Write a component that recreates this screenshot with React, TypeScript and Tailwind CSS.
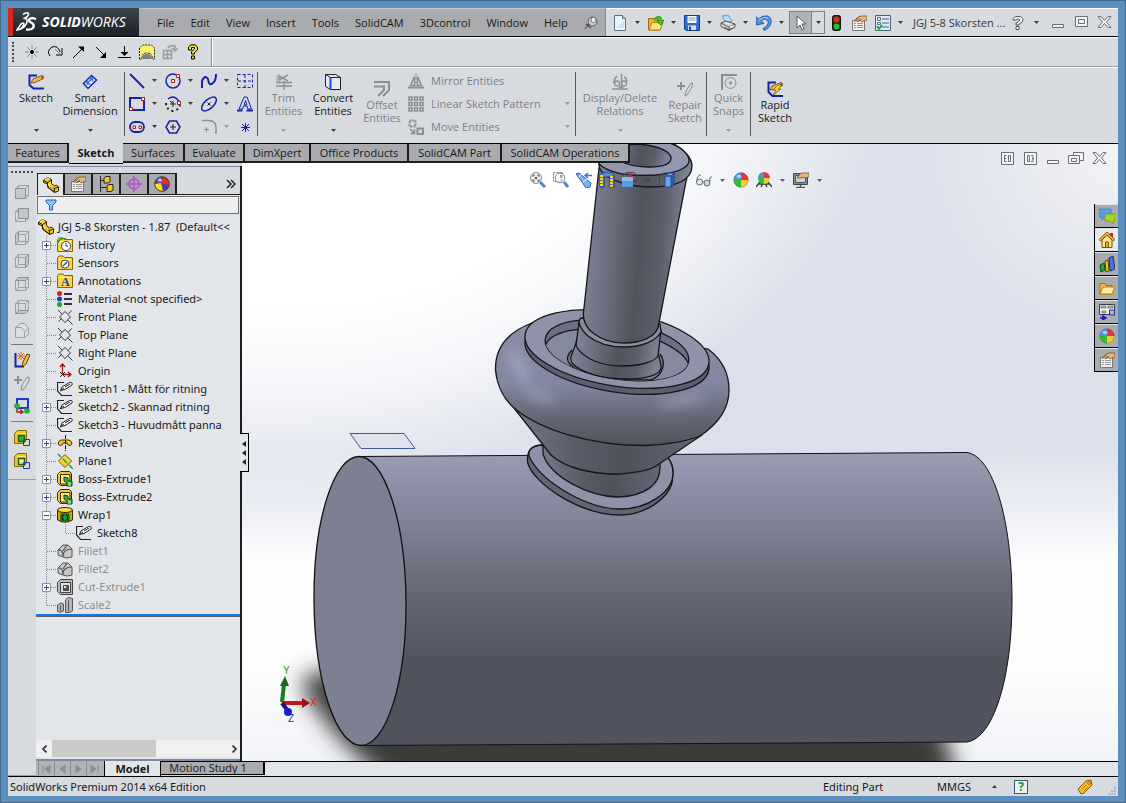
import React from "react";

type IconProps = { children: React.ReactNode; w?: number; h?: number };

const Icon = ({ children, w = 16, h = 16 }: IconProps) => (
    <svg
        width={w}
        height={h}
        viewBox={`0 0 ${w} ${h}`}
        fill="none"
        className="shrink-0"
        aria-hidden="true"
    >
        {children}
    </svg>
);

const Caret = ({ dim = false }: { dim?: boolean }) => (
    <Icon w={5} h={3}>
        <path d="M0 0h5L2.500 3z" fill={dim ? "#94979b" : "#3a3c40"} />
    </Icon>
);

/* ---------- shared glyphs ---------- */

const PartGlyph = () => (
    <Icon>
        <path d="M.5 3.500l4-3 4 2v4l3 2.500 2-1 2 2v4l-4 1.500-6.500-5-1-4-3.500-1z" fill="#f5c81c" stroke="#2a2000" />
        <path d="M.5 3.500l4 2 4-2.500M4.500 5.500v4.500l7 5M11.500 11.500v4M11.500 11.500l4-1.500M5 9l6.500 2.500" stroke="#2a2000" />
        <path d="M2 3l2.500-2L7 2.500M6 7v2l4 2" stroke="#fff0a0" />
    </Icon>
);

const HandSheetGlyph = () => (
    <Icon>
        <path d="M1.500 5.500h12v10h-12z" fill="#eeeeec" stroke="#777" />
        <path d="M3 8.500h2M6 8.500h6M3 10.500h2M6 10.500h6M3 12.500h2M6 12.500h6" stroke="#999" />
        <path d="M3 6l4-4 3-1h6v4l-3 1-2 1-2-2-2 2-1-1z" fill="#e8b67a" stroke="#6b4317" strokeWidth=".7" />
        <path d="M5 5l3-2M7 6l3-2" stroke="#6b4317" strokeWidth=".7" />
    </Icon>
);

const BallGlyph = () => (
    <Icon>
        <path d="M8 8V.5A7.500 7.500 0 00.5 8z" fill="#4f8fe8" />
        <path d="M8 8V.5A7.500 7.500 0 0115.500 8z" fill="#e03a36" />
        <path d="M8 8H.5A7.500 7.500 0 008 15.500z" fill="#2fc02f" />
        <path d="M8 8h7.500A7.500 7.500 0 018 15.500z" fill="#f4c93a" />
        <circle cx="8" cy="8" r="7.200" stroke="#555" strokeOpacity=".5" strokeWidth=".7" />
        <ellipse cx="6" cy="4.500" rx="2.500" ry="1.800" fill="#fff" opacity=".55" />
    </Icon>
);

/* red, yellow and blue ball on the DisplayManager tab */
const DisplayGlyph = () => (
    <Icon>
        <circle cx="8" cy="8" r="7.300" fill="#c81c1c" stroke="#222" strokeWidth=".8" />
        <path d="M8 1Q3 1 1.500 5l5 3z" fill="#2b5fd0" />
        <path d="M1 8l6-1 2 8Q2 15 1 8z" fill="#f6e11c" />
        <path d="M8 8l7 1q-1 5-6 6z" fill="#2a4cc0" />
        <path d="M7 7l3-6 5 5v3z" fill="#e0302a" />
        <ellipse cx="6" cy="4" rx="2" ry="1.500" fill="#fff" opacity=".7" />
    </Icon>
);

const SketchGlyph = () => (
    <Icon>
        <path d="M7 1.500H.5V10l4 4.500H15" stroke="#222" strokeWidth="1.200" />
        <path d="M3.500 9.500L5 6l7.500-4.500q3.500-.5 2.500 2.500L8 8.500z" fill="#fff" stroke="#222" />
        <path d="M3 10l4-3M8 6l5-3" stroke="#222" />
    </Icon>
);

const PlaneGlyph = () => (
    <Icon>
        <path d="M8 2.500l5.500 5.500L8 13.500 2.500 8zM1 1l4 4M11 11l4.500 4.500M1.500 12.500l3-3M11.500 5l3-3.500" stroke="#333" />
    </Icon>
);

const BossGlyph = () => (
    <Icon>
        <path d="M.5 3.500l3-3h9l2 2v12h-11l-3-3z" fill="#f3c92a" stroke="#3a2c00" />
        <path d="M3.500 3.500h9.500v9.500H3.500z" fill="#ffe88a" stroke="#3a2c00" />
        <path d="M7 6l4 1v3h4v5h-5v-3l-3-2z" fill="#35b044" stroke="#0d4a14" />
        <path d="M11 11.500h3v3h-3z" fill="#8be08f" />
    </Icon>
);

const FolderGlyph = ({ children }: { children: React.ReactNode }) => (
    <Icon>
        <path d="M.5 14.500v-12L2 1h4l1.500 1.500h8v12z" fill="#f9d44a" stroke="#8a6200" />
        <path d="M1.500 4.500h13" stroke="#fff0a8" />
        {children}
    </Icon>
);

const FilletGlyph = () => (
    <Icon>
        <path d="M1 7l5-5h5l4 4v8l-5 1-4-1-5-2z" fill="#c8c8c8" stroke="#555" />
        <path d="M1 7q5-1 5 7M6 13q0-7 9-7M6 8l4-6" stroke="#555" strokeWidth="1.200" />
    </Icon>
);

const CubeGlyph = ({ face }: { face: string }) => (
    <Icon>
        <path d="M1.500 4.500h10v10h-10zM4.500 1.500h10v10h-10zM1.500 4.500l3-3M11.500 4.500l3-3M11.500 14.500l3-3M1.500 14.500l3-3" stroke="#9c9fa3" />
        <path d={face} fill="#c3c6ca" stroke="#8d9094" />
    </Icon>
);

/* ---------- title bar ---------- */

const menus = ["File", "Edit", "View", "Insert", "Tools", "SolidCAM", "3Dcontrol", "Window", "Help"];

const fileTools = [
    {
        label: "New",
        icon: (
            <Icon>
                <path d="M2.500 .5h8l3 3v12h-11z" fill="#eaf4fd" stroke="#5e7286" />
                <path d="M10.500 .5v3h3" fill="#bcd4ea" stroke="#5e7286" />
                <path d="M4 13h8V6z" fill="#cfe3f5" />
            </Icon>
        ),
    },
    {
        label: "Open",
        icon: (
            <Icon>
                <path d="M.5 15V3.500h5l1 2H12V15z" fill="#f6b52c" stroke="#a86a08" />
                <path d="M.8 15L4 7.500h11L12 15z" fill="#ffe27a" stroke="#b77d10" />
                <path d="M6 4q3-4 7-2l1 4 2-1-3 5-4-3 2-.5Q10 3 6 4z" fill="#45c92c" stroke="#16760a" strokeWidth=".7" />
            </Icon>
        ),
    },
    {
        label: "Save",
        icon: (
            <Icon>
                <path d="M.5 .5h15v15H2l-1.500-1.500z" fill="#2d6fd2" stroke="#103a80" />
                <path d="M3.500 1h9v7h-9z" fill="#f5f7fa" />
                <path d="M4.500 3h7M4.500 5h7" stroke="#8d9cb0" />
                <path d="M4 10.500h8V15H4z" fill="#d9dde3" />
                <path d="M5 11.500h2V15H5z" fill="#1b3f80" />
            </Icon>
        ),
    },
    {
        label: "Print",
        icon: (
            <Icon>
                <path d="M2 1l6-1 4 6-6 2z" fill="#b9dcf8" stroke="#5b86a8" strokeWidth=".8" />
                <path d="M1 8l5-2 9 3v3l-6 3.500-8-4z" fill="#d9dbde" stroke="#55585c" />
                <path d="M1 8l8 4 6-3M9 12v3M4 12l5 2.500 4-2" stroke="#55585c" />
                <path d="M10 12.500l3-1.500" stroke="#fff" strokeWidth="1.500" />
            </Icon>
        ),
    },
    {
        label: "Undo",
        icon: (
            <Icon>
                <path d="M0 1.500l2 2.500q5-4 10-3 4 2 3 7-1 5-7 7.500l-1-2q6-3 5-7-2-4-7-1l3 3-7.500 1.500z" fill="#4d95e6" stroke="#134c98" strokeWidth=".8" />
                <path d="M3 5q5-4 9-2" stroke="#b4d7fa" />
            </Icon>
        ),
    },
];

const DsLogo = () => (
    <Icon w={22} h={22}>
        <path d="M7 3.500q4-3 5.500-1 .5 3-5 5 5-1 3 5-3 6-9.500 6.500l4-6q3-2 3 0-1 4-4 5" stroke="#fff" strokeWidth="1.600" />
        <path d="M20 8q-6-2-7 1 0 2 3 3 3 2 1 5-2 2-7 1.500" stroke="#fff" strokeWidth="2.300" />
    </Icon>
);

type WindowButtonKind = "min" | "max" | "close" | "restore" | "left" | "right";

const windowShapes: Record<WindowButtonKind, string> = {
    min: "M2.500 9.500h11v3h-11z",
    max: "M2.500 1.500h12v10h-12zM5.500 4.500h6v4h-6z",
    close: "M2 1.500h3l3.500 4 3.500-4h3l-4.500 5.500 4.500 5.500h-3l-3.500-4-3.500 4H2L6.500 7z",
    restore: "M5.500 4.500v-3h10v8h-4M.5 4.500h11v8H.5zM3.500 7.500h5v3h-5z",
    left: "M2.500 1.500h12v12h-12zM9.500 4.500h2v6h-2zM7.500 4.500H5.500v6h2M5 7.500h2",
    right: "M2.500 1.500h12v12h-12zM5.500 4.500h2v6h-2zM9 4.500h2v6H9M10 7.500h2",
};

const WindowButton = ({ kind }: { kind: WindowButtonKind }) => (
    <button aria-label={kind} className="flex w-[23px] justify-center">
        <Icon h={15}>
            <path d={windowShapes[kind]} fill="#f8f9fb" fillOpacity=".8" stroke="#6b6e79" />
        </Icon>
    </button>
);

const TitleBar = () => (
    <header className="flex h-[29px] shrink-0 items-stretch border-b border-black bg-[#d7dbe0]">
        <div className="flex w-[131px] shrink-0 items-center border-l-[5px] border-[#d8281c] bg-linear-to-b from-[#3d454d] to-[#1a2027] pl-[3px] text-white">
            <DsLogo />
            <span className="ml-[4px] text-sm leading-4 italic">
                <b>SOLID</b>WORKS
            </span>
        </div>
        <nav className="flex w-[467px] shrink-0 items-center gap-4 border-t border-r border-t-[#c3c5c8] border-r-[#85878a] bg-[#a9abae] pl-[18px]">
            {menus.map((menu) => (
                <button key={menu} className="whitespace-nowrap">
                    {menu}
                </button>
            ))}
            <button aria-label="Pin menu">
                <Icon w={14} h={14}>
                    <path d="M1 13l4-5" stroke="#444" />
                    <circle cx="8.500" cy="5.500" r="4.500" fill="#c6c9ce" stroke="#55585d" />
                    <circle cx="9.500" cy="4" r="2.500" fill="#eef0f3" stroke="#777a80" />
                    <path d="M2 8l5 4" stroke="#444" strokeWidth="1.500" />
                </Icon>
            </button>
        </nav>
        <div className="flex flex-1 items-center border-t border-white pl-[3px]">
            {fileTools.map((tool) => (
                <div key={tool.label} className="mr-[2px] flex items-center">
                    <button aria-label={tool.label} className="flex w-[22px] justify-center">
                        {tool.icon}
                    </button>
                    <button aria-label={`${tool.label} options`} className="flex w-3 justify-center">
                        <Caret />
                    </button>
                </div>
            ))}
            <div className="flex h-[23px] items-stretch border border-[#7d8084]">
                <button aria-label="Select" className="flex w-[22px] items-center justify-center border-r border-[#7d8084] bg-[#b0b3b7]">
                    <Icon w={10} h={16}>
                        <path d="M1 1v12l3-3 2 5 2-1-2-5h4z" fill="#fff" stroke="#555" />
                    </Icon>
                </button>
                <button aria-label="Select options" className="flex w-3 items-center justify-center">
                    <Caret />
                </button>
            </div>
            <button aria-label="Rebuild" className="ml-[7px]">
                <Icon w={9}>
                    <rect x=".5" y=".5" width="8" height="15" rx="2" fill="#222" stroke="#111" />
                    <circle cx="4.500" cy="4.500" r="3" fill="#e02a20" />
                    <circle cx="4.500" cy="11.500" r="3" fill="#25c425" />
                </Icon>
            </button>
            <button aria-label="File properties" className="ml-[10px]">
                <HandSheetGlyph />
            </button>
            <button aria-label="Options" className="ml-[8px]">
                <Icon>
                    <path d="M.5 .5h15v15H.5z" fill="#dcebf7" stroke="#4c6377" />
                    <path d="M2.500 2.500h3v3h-3zM2.500 7.500h3v2h-3z" stroke="#5a7286" />
                    <path d="M7 4h7M7 8h7M7 12h7" stroke="#4c6377" />
                    <path d="M2 11l2 3 3-4" stroke="#1aa51a" strokeWidth="1.800" />
                </Icon>
            </button>
            <button aria-label="Options menu" className="ml-[7px]">
                <Caret />
            </button>
            <span className="ml-[10px] flex-1 whitespace-nowrap text-[#33363a]">JGJ 5-8 Skorsten ...</span>
            <button aria-label="Help" className="mr-[10px]">
                <Icon w={12} h={14}>
                    <path d="M1 4q0-3.500 5-3.500t5 3.500q0 2-4 4v1H4V7q4-2 4-3t-2-1-2 1zM4 10.500h3v3H4z" fill="#fff" stroke="#4c4f55" />
                </Icon>
            </button>
            <button aria-label="Help menu" className="mr-[7px]">
                <Caret />
            </button>
            <WindowButton kind="min" />
            <WindowButton kind="max" />
            <WindowButton kind="close" />
            <div className="w-[3px]" />
        </div>
    </header>
);

/* ---------- quick snap toolbar ---------- */

const snapTools = [
    {
        label: "Point",
        icon: (
            <Icon>
                <path d="M8 1v4M8 11v4M1 8h4M11 8h4M3 3l3 3M13 3l-3 3M3 13l3-3M13 13l-3-3" stroke="#888" />
                <circle cx="8" cy="8" r="2" fill="#000" />
            </Icon>
        ),
    },
    {
        label: "Arc",
        icon: (
            <Icon>
                <path d="M3 12Q-1 7 5 3q6-2 8 5" stroke="#000" />
                <path d="M15 4v7H9" stroke="#000" />
                <path d="M8 5l5 5" stroke="#777" />
            </Icon>
        ),
    },
    {
        label: "Arrow up",
        icon: (
            <Icon>
                <path d="M3 14L12 5" stroke="#000" />
                <path d="M8 2.500h6V8z" fill="#000" />
            </Icon>
        ),
    },
    {
        label: "Arrow down",
        icon: (
            <Icon>
                <path d="M3 3l9 9" stroke="#000" />
                <path d="M13 8v6H7z" fill="#000" />
            </Icon>
        ),
    },
    {
        label: "Normal to",
        icon: (
            <Icon>
                <path d="M8.500 2v7M2 13.500h13" stroke="#000" />
                <path d="M4.500 8h8l-4 4z" fill="#000" />
            </Icon>
        ),
    },
    {
        label: "Render region",
        icon: (
            <Icon>
                <path d="M.5 15V4l3-3h9l3 3v11h-2q0-6-5.500-6T3 15z" fill="#fbf36a" stroke="#222" strokeDasharray="2 1" />
                <path d="M3 15q0-5 5-5t5 5z" fill="#808080" />
            </Icon>
        ),
    },
    {
        label: "Rebuild geometry",
        icon: (
            <Icon>
                <path d="M1.500 6.500h4v4h-4zM5.500 6.500h4v4h-4zM1.500 10.500h4v4h-4zM5.500 10.500h4v4h-4z" stroke="#999" strokeWidth="1.500" />
                <path d="M6 4q1-3 7-2v3M10 4l3 3 3-3" stroke="#999" strokeWidth="1.500" />
            </Icon>
        ),
    },
    {
        label: "What's this",
        icon: (
            <Icon>
                <path d="M3.500 6V3L6 .8h4L12.500 3v3L9.500 8.500V10h-3V7.500L9.500 5V3.500h-3V6zM6.500 12h3v3h-3z" fill="#f7e81c" stroke="#000" />
            </Icon>
        ),
    },
];

const SnapToolbar = () => (
    <div className="flex h-[30px] shrink-0 items-stretch border-t border-b border-t-white border-b-[#9a9da1]">
        <div className="my-1 ml-1 mr-[6px] border-l-2 border-dotted border-[#44474b]" />
        <div className="flex border-r border-[#8c8f93] pr-[7px]">
            {snapTools.map((tool) => (
                <button key={tool.label} aria-label={tool.label} className="flex w-[23px] items-center justify-center">
                    {tool.icon}
                </button>
            ))}
        </div>
        <div className="flex-1 border-l border-white" />
    </div>
);

/* ---------- ribbon ---------- */

const blue = "#1522a8";
const grey = "#8b8e92";

type BigButtonProps = {
    lines: string[];
    icon: React.ReactNode;
    width: string;
    low?: boolean;
    dim?: boolean;
    caret?: boolean;
};

const BigButton = ({ lines, icon, width, low, dim, caret }: BigButtonProps) => (
    <button
        className={`flex shrink-0 flex-col items-center ${width} ${low ? "pt-[13px]" : "pt-[6px]"} ${dim ? "text-[#7d8084]" : ""}`}
    >
        {icon}
        <span className="mt-px flex flex-1 flex-col">
            {lines.map((line) => (
                <span key={line} className="leading-[13px] whitespace-nowrap">
                    {line}
                </span>
            ))}
        </span>
        {caret && (
            <span className="pb-[11px]">
                <Caret dim={dim} />
            </span>
        )}
    </button>
);

const Divider = () => <div className="mt-[4px] mb-[7px] w-px shrink-0 bg-[#55585c]" />;

const sketchTools = [
    { label: "Line", caret: true, icon: <path d="M1 1l14 14" stroke={blue} strokeWidth="2" /> },
    {
        label: "Circle",
        caret: true,
        icon: (
            <>
                <circle cx="8" cy="8" r="7" stroke={blue} strokeWidth="1.500" />
                <path d="M6.500 6.500h3v3h-3zM11.500 1.500h3v3h-3z" fill="#fff" stroke="#b01818" />
            </>
        ),
    },
    { label: "Spline", caret: true, icon: <path d="M1 15V8q3-7 6-2 1 8 5 4 3-2 3-9" stroke={blue} strokeWidth="2" /> },
    { label: "Plane", icon: <path d="M.5 1.500h15v13H.5zM1 8h14M8 2v13" stroke={blue} strokeDasharray="3 2" /> },
    {
        label: "Rectangle",
        caret: true,
        icon: (
            <>
                <path d="M1 2h14v12H1z" stroke={blue} strokeWidth="2" />
                <path d="M12.500 1.500h3v3h-3zM.5 11.500h3v3h-3z" fill="#fff" stroke="#b01818" />
            </>
        ),
    },
    {
        label: "Arc",
        caret: true,
        icon: (
            <>
                <path d="M3 3q5-4 9 0 2 2 3 4" stroke={blue} strokeWidth="1.500" />
                <path d="M1 7q0 7 7 8 6-1 7-6" stroke="#222" strokeWidth="2" strokeDasharray="2 3" />
                <path d="M8 5v6M5 8h6M5 5l3 3" stroke="#222" />
                <path d="M12.500 5.500h3v3h-3z" fill="#fff" stroke="#b01818" />
            </>
        ),
    },
    {
        label: "Ellipse",
        caret: true,
        icon: (
            <>
                <ellipse cx="8" cy="8" rx="9" ry="4.500" transform="rotate(-42 8 8)" stroke={blue} strokeWidth="1.500" />
                <path d="M6.500 6.500l3 3M9.500 6.500l-3 3" stroke="#222" />
            </>
        ),
    },
    {
        label: "Text",
        icon: (
            <>
                <path d="M7 1h3l4.500 12h-3.500l-1-3H6.500l-1 3H2zM8.500 4.500L7 9h3z" stroke={blue} />
                <path d="M0 14.500h5.500M9.500 14.500H16" stroke={blue} strokeWidth="2" />
            </>
        ),
    },
    {
        label: "Slot",
        caret: true,
        icon: (
            <>
                <rect x="1" y="3" width="14" height="10" rx="5" stroke={blue} strokeWidth="1.800" />
                <path d="M4 7h2.500v2.500H4zM10 7h2.500v2.500H10z" fill="#fff" stroke="#b01818" />
            </>
        ),
    },
    {
        label: "Polygon",
        icon: (
            <>
                <path d="M4.500 2h7L15 8l-3.500 6h-7L1 8z" stroke={blue} strokeWidth="1.500" />
                <path d="M8 5v6M5 8h6" stroke="#222" />
            </>
        ),
    },
    {
        label: "Sketch fillet",
        caret: true,
        dim: true,
        icon: (
            <>
                <path d="M1 1.500h7q7 0 7 7V15" stroke={grey} strokeWidth="1.500" />
                <path d="M5.500 8v5M3 10.500h5" stroke={grey} />
            </>
        ),
    },
    {
        label: "Point",
        icon: <path d="M8.500 4v9M4 8.500h9M5 5l7 7M12 5l-7 7" stroke={blue} />,
    },
];

const Pencil = () => (
    <>
        <path d="M3 9l2-4 9-3.500q2.500.5 1.500 3L7 8.500z" fill="#f0b848" stroke="#6b3e08" strokeWidth=".8" />
        <path d="M13 2q3-.5 2.500 2.500L13.500 5z" fill="#d0405a" />
    </>
);

const entityRows = [
    {
        label: "Mirror Entities",
        icon: (
            <>
                <path d="M6.500 3.500v9h-4zM9.500 3.500v9h4z" stroke={grey} strokeWidth="1.500" />
                <path d="M8 0v14" stroke={grey} strokeDasharray="3 1" />
                <path d="M0 14.500h16" stroke={grey} strokeWidth="2" />
            </>
        ),
    },
    {
        label: "Linear Sketch Pattern",
        caret: true,
        icon: (
            <path
                d="M1 1h3v3H1zM6.500 1h3v3h-3zM12 1h3v3h-3zM1 6.500h3v3H1zM6.500 6.500h3v3h-3zM12 6.500h3v3h-3zM1 12h3v3H1zM6.500 12h3v3h-3zM12 12h3v3h-3z"
                stroke={grey}
                strokeWidth="1.500"
            />
        ),
    },
    {
        label: "Move Entities",
        caret: true,
        icon: (
            <>
                <path d="M1.500 1.500h6v6h-6z" stroke={grey} strokeWidth="2" strokeDasharray="2 1" />
                <path d="M9.500 9.500h5.500V15H9.500z" stroke={grey} strokeWidth="2" />
                <path d="M2 10l4 4M6.500 10v4.500h-4" stroke={grey} strokeWidth="1.500" />
            </>
        ),
    },
];

const Ribbon = () => (
    <div className="flex h-[77px] shrink-0 items-stretch border-t border-b border-t-white border-b-black">
        <BigButton
            lines={["Sketch"]}
            width="w-14"
            caret
            icon={
                <Icon>
                    <path d="M9 1.500H1.500V11l4 3.500H16" stroke={blue} strokeWidth="2" />
                    <Pencil />
                </Icon>
            }
        />
        <BigButton
            lines={["Smart", "Dimension"]}
            width="w-[52px]"
            caret
            icon={
                <Icon>
                    <path d="M1 10.500L10.500 1M5.500 15.500L15 6" stroke={blue} strokeWidth="0" />
                    <path d="M1.500 9.500l4.500 5 8.500-8.500-5-4.500z" fill="#f2f5ff" stroke={blue} strokeWidth="1.500" />
                    <path d="M5 9.500l5-5M5 6.500v3.500h3.500M7 4h3.500v3.500" stroke="#3c68e8" strokeWidth="1.500" />
                </Icon>
            }
        />
        <div className="w-2 shrink-0" />
        <Divider />
        <div className="grid shrink-0 grid-cols-[36px_36px_36px_24px] grid-rows-[23px_23px_23px] pt-px">
            {sketchTools.map((tool) => (
                <div key={tool.label} className="flex items-center">
                    <button aria-label={tool.label} className="flex w-6 justify-center">
                        <Icon>{tool.icon}</Icon>
                    </button>
                    {tool.caret && (
                        <button aria-label={`${tool.label} options`} className="flex w-[10px] justify-center">
                            <Caret dim={tool.dim} />
                        </button>
                    )}
                </div>
            ))}
        </div>
        <Divider />
        <BigButton
            lines={["Trim", "Entities"]}
            width="w-[51px]"
            dim
            caret
            icon={
                <Icon>
                    <path d="M0 8.500h16M0 12h16M8 7v9M3 2l9 5M3 6l9-5" stroke={grey} strokeWidth="1.500" />
                    <circle cx="2.500" cy="2.500" r="1.500" stroke={grey} />
                    <circle cx="2.500" cy="6" r="1.500" stroke={grey} />
                </Icon>
            }
        />
        <BigButton
            lines={["Convert", "Entities"]}
            width="w-12"
            caret
            icon={
                <Icon>
                    <path d="M.5 .5h10l5 3v12h-10l-5-3zM5.500 3.500h10M.5 .5l5 3" fill="#e6e9ed" stroke="#222" />
                    <path d="M5.500 3.500v12" stroke="#1b48f0" strokeWidth="2" />
                </Icon>
            }
        />
        <BigButton
            lines={["Offset", "Entities"]}
            width="w-[50px]"
            low
            dim
            icon={
                <Icon>
                    <path d="M0 1h15v8l-6 6M0 5.500h10V9l-6 6" stroke={grey} strokeWidth="2" />
                </Icon>
            }
        />
        <div className="w-[168px] shrink-0 pt-px">
            {entityRows.map((row) => (
                <div key={row.label} className="flex h-[23px] items-center pl-px text-[#7d8084]">
                    <button className="flex flex-1 items-center gap-[7px]">
                        <Icon>{row.icon}</Icon>
                        {row.label}
                    </button>
                    {row.caret && (
                        <button aria-label={`${row.label} options`} className="mr-[5px]">
                            <Caret dim />
                        </button>
                    )}
                </div>
            ))}
        </div>
        <Divider />
        <BigButton
            lines={["Display/Delete", "Relations"]}
            width="w-[88px]"
            dim
            caret
            icon={
                <Icon>
                    <path d="M0 15h16M9.500 0v13M5 2q-4 4-2.500 8M12 3q3 1 2.500 5" stroke={grey} strokeWidth="1.500" />
                    <circle cx="5" cy="9.500" r="2.500" stroke={grey} strokeWidth="1.300" />
                    <circle cx="12" cy="9.500" r="2.500" stroke={grey} strokeWidth="1.300" />
                    <path d="M6 14l3-3 3 3z" fill={grey} />
                </Icon>
            }
        />
        <BigButton
            lines={["Repair", "Sketch"]}
            width="w-[42px]"
            low
            dim
            icon={
                <Icon>
                    <path d="M4 1v8M0 5h8" stroke={grey} strokeWidth="2" />
                    <path d="M8 15l1-5 5-8h1.500l-.5 4-5 8z" stroke={grey} />
                </Icon>
            }
        />
        <Divider />
        <BigButton
            lines={["Quick", "Snaps"]}
            width="w-[43px]"
            dim
            caret
            icon={
                <Icon>
                    <path d="M1 16V1h15" stroke={grey} strokeWidth="2" />
                    <circle cx="9.500" cy="9" r="5.500" stroke={grey} />
                    <circle cx="9.500" cy="9" r="1.500" fill={grey} />
                </Icon>
            }
        />
        <Divider />
        <BigButton
            lines={["Rapid", "Sketch"]}
            width="w-12"
            low
            icon={
                <Icon>
                    <path d="M9 1.500H1.500V11l4 4H16" stroke={blue} strokeWidth="2" />
                    <Pencil />
                    <path d="M11 4L6 9h3l-3 5 8-6h-3l4-4z" fill="#ffd91c" stroke="#6b4a00" strokeWidth=".7" />
                </Icon>
            }
        />
    </div>
);

/* ---------- command manager tabs ---------- */

const commandTabs = [
    { title: "Features", width: "w-[61px]" },
    { title: "Sketch", width: "w-[54px]" },
    { title: "Surfaces", width: "w-[62px]" },
    { title: "Evaluate", width: "w-[60px]" },
    { title: "DimXpert", width: "w-[66px]" },
    { title: "Office Products", width: "w-[98px]" },
    { title: "SolidCAM Part", width: "w-[93px]" },
    { title: "SolidCAM Operations", width: "w-[128px]" },
];

const CommandTabs = () => (
    <nav className="z-10 -mb-5 flex h-5 shrink-0 items-start self-start">
        {commandTabs.map((tab) =>
            tab.title === "Sketch" ? (
                <button key={tab.title} className={`-mt-px h-[21px] border-b border-black bg-[#d7dbe0] font-bold ${tab.width}`}>
                    {tab.title}
                </button>
            ) : (
                <button
                    key={tab.title}
                    className={`h-[19px] border-r-2 border-b-2 border-[#1c1d1f] bg-[#a9abae] whitespace-nowrap ${tab.width}`}
                >
                    {tab.title}
                </button>
            )
        )}
    </nav>
);

/* ---------- left view toolbar ---------- */

const cubeFaces = [
    "M1.500 4.500h10v10h-10z",
    "M4.500 1.500h10v10h-10z",
    "M1.500 4.500l3-3v10l-3 3z",
    "M11.500 4.500l3-3v10l-3 3z",
    "M1.500 4.500l3-3h10l-3 3z",
    "M1.500 14.500l3-3h10l-3 3z",
];

const SideToolbar = () => (
    <div className="flex w-7 shrink-0 flex-col items-center border-t border-[#8088a0]">
        <div className="mt-1 mb-[7px] w-[22px] border-t-2 border-dotted border-[#44474b]" />
        {cubeFaces.map((face) => (
            <button key={face} aria-label="Standard view" className="flex h-[23px] items-center">
                <CubeGlyph face={face} />
            </button>
        ))}
        <button aria-label="Isometric" className="flex h-[23px] items-center">
            <Icon>
                <path d="M1.500 5.500l5-4h4l4 5v6l-4 3h-9z" fill="#dcdfe3" stroke="#9c9fa3" />
                <path d="M1.500 5.500h6l3 4v6M10.500 9.500l4-3" stroke="#9c9fa3" />
            </Icon>
        </button>
        <div className="my-[3px] w-[22px] border-t border-[#77797d]" />
        <button aria-label="New sketch" className="flex h-[23px] items-center">
            <Icon>
                <path d="M1.500 1v13.500H10" stroke={blue} strokeWidth="2" />
                <path d="M7 0v8M3 4h8M4 1l6 6M10 1L4 7" stroke="#f0661c" />
                <path d="M8 15l1-5 4-8 3 1-4 9z" fill="#f5c542" stroke="#5c3a05" />
            </Icon>
        </button>
        <button aria-label="Repair sketch" className="flex h-[23px] items-center">
            <Icon>
                <path d="M4 1v8M0 5h8" stroke={grey} strokeWidth="2" />
                <path d="M7 15l1-5 5-8h2v4l-5 8z" stroke={grey} />
            </Icon>
        </button>
        <button aria-label="Relations" className="flex h-[23px] items-center">
            <Icon>
                <path d="M3 1h11v9H3z" stroke="#2338c8" strokeWidth="2" />
                <circle cx="3" cy="8" r="2.800" fill="#25b033" />
                <circle cx="13" cy="13" r="2.800" fill="#25b033" />
                <path d="M3 11v3h5M6 11.500l3 2.500-3 2" stroke="#c01818" strokeWidth="1.500" />
            </Icon>
        </button>
        <div className="my-1 w-[22px] border-t border-[#77797d]" />
        {[0, 1].map((n) => (
            <button key={n} aria-label="Extrude" className="flex h-[23px] items-center">
                <Icon>
                    <path d="M.5 3.500l3-3h9v9l-3 4h-9z" fill="#f3c92a" stroke="#8a6500" />
                    <path d="M3 3.500h9" stroke="#ffe88a" />
                    <path d="M4.500 5.500h6v6h-6z" fill={n ? "#fbe890" : "#2fae3c"} stroke="#15661d" strokeWidth="1.500" />
                    <path d="M9.500 9.500h6v6h-6z" stroke="#2338c8" />
                </Icon>
            </button>
        ))}
        <div className="mt-[7px] w-full border-t border-[#9a9da1]" />
    </div>
);

/* ---------- feature tree ---------- */

type TreeItem = {
    title: string;
    icon: React.ReactNode;
    toggle?: "+" | "-";
    nested?: boolean;
    dim?: boolean;
};

const treeItems: TreeItem[] = [
    {
        title: "History",
        toggle: "+",
        icon: (
            <FolderGlyph>
                <circle cx="9" cy="9" r="4.500" fill="#fff" stroke="#274a9c" />
                <path d="M9 6v3h2" stroke="#274a9c" />
                <path d="M1 5q3-5 8-3" stroke="#2a9a30" strokeWidth="1.500" />
            </FolderGlyph>
        ),
    },
    {
        title: "Sensors",
        icon: (
            <FolderGlyph>
                <circle cx="8" cy="9" r="4" fill="#fff" stroke="#444" />
                <path d="M6 11l4-4" stroke="#274a9c" strokeWidth="1.500" />
            </FolderGlyph>
        ),
    },
    {
        title: "Annotations",
        toggle: "+",
        icon: (
            <FolderGlyph>
                <text x="4" y="13" fontSize="12" fontWeight="700" fontFamily="Liberation Serif, serif" fill="#1b34b0">
                    A
                </text>
            </FolderGlyph>
        ),
    },
    {
        title: "Material <not specified>",
        icon: (
            <Icon>
                <circle cx="2.500" cy="2.500" r="2.500" fill="#d81e1e" />
                <circle cx="2.500" cy="8" r="2.500" fill="#2036d0" />
                <circle cx="2.500" cy="13.500" r="2.500" fill="#1fa82a" />
                <path d="M7 3h8M7 8h8M7 13h8" stroke="#333" strokeWidth="2" />
            </Icon>
        ),
    },
    { title: "Front Plane", icon: <PlaneGlyph /> },
    { title: "Top Plane", icon: <PlaneGlyph /> },
    { title: "Right Plane", icon: <PlaneGlyph /> },
    {
        title: "Origin",
        icon: (
            <Icon>
                <path d="M5.500 11V2M6 11.500h8M3 4l2.500-3L8 4M11 9l3 2.500-3 2.500" stroke="#a01414" strokeWidth="1.300" />
                <path d="M3 9l5 5M8 9l-5 5" stroke="#222" />
            </Icon>
        ),
    },
    { title: "Sketch1 - Mått för ritning", icon: <SketchGlyph /> },
    { title: "Sketch2 - Skannad ritning", toggle: "+", icon: <SketchGlyph /> },
    { title: "Sketch3 - Huvudmått panna", icon: <SketchGlyph /> },
    {
        title: "Revolve1",
        toggle: "+",
        icon: (
            <Icon>
                <path d="M1 9q0-3 3-4h8q3 1 3 4-2 3-4.500.500L10 8H6l-.5 1.500Q3 12 1 9z" fill="#f1c232" stroke="#4a3500" />
                <path d="M8.500 0v16" stroke="#111" strokeDasharray="4 1" />
            </Icon>
        ),
    },
    {
        title: "Plane1",
        icon: (
            <Icon>
                <path d="M8 1.500L14.500 8 8 14.500 1.500 8z" fill="#f7d53a" stroke="#6b5200" />
                <path d="M1 1l3 3M12 12l4 4M6 6l4 4" stroke="#1c8a28" strokeWidth="1.300" />
            </Icon>
        ),
    },
    { title: "Boss-Extrude1", toggle: "+", icon: <BossGlyph /> },
    { title: "Boss-Extrude2", toggle: "+", icon: <BossGlyph /> },
    {
        title: "Wrap1",
        toggle: "-",
        icon: (
            <Icon>
                <path d="M.5 3v10q7.500 4.500 15 0V3z" fill="#d99e12" stroke="#3a2c00" />
                <ellipse cx="8" cy="3" rx="7.500" ry="2.500" fill="#fbd84a" stroke="#3a2c00" />
                <path d="M4 7h8v7H4z" fill="#1f9a2c" stroke="#0b4512" />
                <path d="M7 8.500H5.500v4H7M9 8.500h1.500v4H9" stroke="#0b2a0e" />
            </Icon>
        ),
    },
    { title: "Sketch8", nested: true, icon: <SketchGlyph /> },
    { title: "Fillet1", dim: true, icon: <FilletGlyph /> },
    { title: "Fillet2", dim: true, icon: <FilletGlyph /> },
    {
        title: "Cut-Extrude1",
        dim: true,
        toggle: "+",
        icon: (
            <Icon>
                <path d="M.5 3.500l3-3h12v15h-12l-3-3z" fill="#b9b9b9" stroke="#444" />
                <path d="M3.500 3.500h10v10h-10zM6.500 6.500h5v5h-5z" fill="#dedede" stroke="#444" />
                <path d="M9 7v2H7v2h4V7z" fill="#555" />
            </Icon>
        ),
    },
    {
        title: "Scale2",
        dim: true,
        icon: (
            <Icon>
                <path d="M.5 8l3-2 3 1v7l-3 1.500-3-1zM8.500 3l3-2.500 4 1v12.500l-3 1.500h-4z" fill="#b5b5b5" stroke="#555" />
                <path d="M11.500 3.500v11M3.500 8.500v6" stroke="#555" />
            </Icon>
        ),
    },
];

const TreeRow = ({ item, last }: { item: TreeItem; last: boolean }) => (
    <li className={`flex h-[18px] items-center pl-[2px] whitespace-pre ${item.dim ? "text-[#8c8f93]" : ""}`}>
        <Icon w={19} h={18}>
            <path d={last ? "M8.500 0v9" : "M8.500 0v18"} stroke="#85888c" strokeDasharray="1 1" />
            {!item.nested && <path d="M9 9.500h9" stroke="#85888c" strokeDasharray="1 1" />}
            {item.toggle && (
                <>
                    <path d="M4.500 5.500h8v8h-8z" fill="#fafbfc" stroke="#8f9499" />
                    <path d={item.toggle === "+" ? "M6 9.500h5M8.500 7v5" : "M6 9.500h5"} stroke="#2c4a94" />
                </>
            )}
        </Icon>
        {item.nested && (
            <Icon w={19} h={18}>
                <path d="M8.500 0v9M9 9.500h9" stroke="#85888c" strokeDasharray="1 1" />
            </Icon>
        )}
        {item.icon}
        <span className="ml-[5px]">{item.title}</span>
    </li>
);

const panelTabs = [
    { label: "FeatureManager", icon: <PartGlyph /> },
    { label: "PropertyManager", icon: <HandSheetGlyph /> },
    {
        label: "ConfigurationManager",
        icon: (
            <Icon>
                <path d="M2.500 0v16M3 4.500h4M3 11.500h5" stroke="#222" />
                <path d="M6 2l2-1.500h4v5l-2 1.500H6zM9 10l2-1.500h4V14l-2 1.500H9z" fill="#f5c81c" stroke="#222" />
            </Icon>
        ),
    },
    {
        label: "DimXpertManager",
        icon: (
            <Icon>
                <circle cx="8" cy="8" r="5" stroke="#b050d0" strokeWidth="1.500" />
                <path d="M8 0v16M0 8h16" stroke="#b050d0" strokeWidth="1.500" />
            </Icon>
        ),
    },
    { label: "DisplayManager", icon: <DisplayGlyph /> },
];

const FeaturePanel = () => (
    <aside className="flex w-[206px] shrink-0 flex-col border-r-2 border-[#1c1d1f] bg-[#e2e5e9]">
        <div className="flex h-[29px] shrink-0 items-end border-t border-[#8088a0] bg-[#d7dbe0] pl-px">
            {panelTabs.map((tab, i) => (
                <button
                    key={tab.label}
                    aria-label={tab.label}
                    className={`flex h-[22px] w-7 items-center justify-center border-t border-r-2 border-[#1c1d1f] ${i === 0 ? "border-l bg-[#e2e5e9]" : "border-b bg-[#a9abae]"}`}
                >
                    {tab.icon}
                </button>
            ))}
            <button aria-label="More tabs" className="flex h-[22px] flex-1 items-center justify-end border-b border-[#1c1d1f] pr-1">
                <Icon w={10} h={10}>
                    <path d="M1 1l4 4-4 4M5 1l4 4-4 4" stroke="#222" strokeWidth="1.500" />
                </Icon>
            </button>
        </div>
        <label className="mx-px mt-px flex h-[18px] shrink-0 items-center border border-[#6d7074] bg-[#efefef] pl-[7px]">
            <Icon w={12} h={12}>
                <path d="M1 1h10v2L7.500 6.500V11h-3V6.500L1 3z" fill="#8cc4f5" stroke="#1a62c0" />
            </Icon>
            <input aria-label="Filter tree" className="ml-1 min-w-0 flex-1 bg-transparent outline-none" />
        </label>
        <div className="min-h-0 flex-1 overflow-hidden pt-1 font-['Noto_Sans',sans-serif]">
            <div className="flex h-[18px] items-center pl-[2px] whitespace-pre">
                <PartGlyph />
                <span className="ml-1">JGJ 5-8 Skorsten - 1.87  (Default&lt;&lt;</span>
            </div>
            <ul>
                {treeItems.map((item, i) => (
                    <TreeRow key={item.title} item={item} last={i === treeItems.length - 1} />
                ))}
            </ul>
            <div className="h-[3px] border-b border-[#5a6068] bg-[#0a78f0]" />
        </div>
        <div className="flex h-[17px] shrink-0 items-center bg-[#f0f0f0]">
            <button aria-label="Scroll left" className="flex w-4 justify-center">
                <Icon w={7} h={8}>
                    <path d="M5.500 .5L2 4l3.500 3.500" stroke="#444" strokeWidth="1.800" />
                </Icon>
            </button>
            <div className="flex-1 self-stretch">
                <div className="h-full w-[104px] bg-[#cbcbcb]" />
            </div>
            <button aria-label="Scroll right" className="flex w-3 justify-center">
                <Icon w={7} h={8}>
                    <path d="M1.500 .5L5 4 1.500 7.500" stroke="#444" strokeWidth="1.800" />
                </Icon>
            </button>
        </div>
        <div className="mt-[2px] h-[2px] shrink-0 bg-[#8088a0]" />
    </aside>
);

/* ---------- graphics area ---------- */

const Model = () => (
    <svg
        className="absolute inset-0 h-full w-full"
        viewBox="242 144 876 617"
        preserveAspectRatio="xMidYMid slice"
        fill="none"
        role="img"
        aria-label="Part model"
    >
        <defs>
            <radialGradient id="glow" gradientUnits="userSpaceOnUse" cx="0" cy="0" r="1" gradientTransform="translate(330 120) rotate(-8) scale(560 370)">
                <stop offset="0.500" stopColor="#ffffff" />
                <stop offset="0.720" stopColor="#ffffff" stopOpacity=".7" />
                <stop offset="1" stopColor="#ffffff" stopOpacity="0" />
            </radialGradient>
            <linearGradient id="floor" gradientUnits="userSpaceOnUse" x1="600" y1="450" x2="600" y2="761">
                <stop offset="0" stopColor="#ffffff" stopOpacity="0" />
                <stop offset=".18" stopColor="#f6f7fa" stopOpacity=".6" />
                <stop offset=".36" stopColor="#fefefe" />
                <stop offset=".7" stopColor="#fdfdfe" />
                <stop offset="1" stopColor="#f2f3f7" />
            </linearGradient>
            <radialGradient id="corner" gradientUnits="userSpaceOnUse" cx="1118" cy="145" r="200">
                <stop offset="0" stopColor="#f3f3f5" />
                <stop offset="1" stopColor="#f3f3f5" stopOpacity="0" />
            </radialGradient>
            <linearGradient id="drum" x1="0" y1="0" x2="0" y2="1">
                <stop offset="0" stopColor="#9a9db6" />
                <stop offset=".2" stopColor="#84869a" />
                <stop offset=".5" stopColor="#646674" />
                <stop offset=".72" stopColor="#50525d" />
                <stop offset="1" stopColor="#51535f" />
            </linearGradient>
            <linearGradient id="pipe" x1="0" y1="0" x2="1" y2=".12">
                <stop offset="0" stopColor="#85889c" />
                <stop offset=".3" stopColor="#6c6e7e" />
                <stop offset=".58" stopColor="#50525c" />
                <stop offset=".8" stopColor="#5c5e6b" />
                <stop offset="1" stopColor="#7d8093" />
            </linearGradient>
            <linearGradient id="bulb" x1="0" y1="0" x2="0" y2="1">
                <stop offset="0" stopColor="#8b8ea4" />
                <stop offset=".5" stopColor="#8286a0" stopOpacity="1" />
                <stop offset=".75" stopColor="#676978" />
                <stop offset="1" stopColor="#50525c" />
            </linearGradient>
            <linearGradient id="cone" x1="0" y1="0" x2="1" y2="0">
                <stop offset="0" stopColor="#75778a" />
                <stop offset=".35" stopColor="#585a66" />
                <stop offset=".6" stopColor="#50525c" />
                <stop offset="1" stopColor="#646674" />
            </linearGradient>
            <clipPath id="well">
                <ellipse cx="617" cy="350" rx="72.500" ry="29" transform="rotate(9 617 350)" />
            </clipPath>
            <filter id="soft" x="-20%" y="-20%" width="140%" height="140%">
                <feGaussianBlur stdDeviation="11" />
            </filter>
            <filter id="gleam" x="-100%" y="-100%" width="300%" height="300%">
                <feGaussianBlur stdDeviation="6" />
            </filter>
        </defs>
        <path d="M242 144h876v617H242z" fill="#dce0eb" />
        <path d="M242 144h876v617H242z" fill="url(#glow)" />
        <path d="M242 144h876v617H242z" fill="url(#corner)" />
        <path d="M242 450h876v311H242z" fill="url(#floor)" />

        {/* ground shadow */}
        <path d="M300 680q25-16 60-6l580 50q10 20 16 60H390Q345 750 312 704z" fill="#3a3a3a" filter="url(#soft)" />

        {/* drum */}
        <path
            d="M360 456.500L967 452.500C993 456 1012 520 1012 600C1012 680 993 738 967 742L362 745.500z"
            fill="url(#drum)"
            stroke="#111"
        />
        <ellipse cx="360" cy="601" rx="46" ry="144.500" transform="rotate(-.5 360 601)" fill="#7d7f92" stroke="#111" strokeWidth="1.300" />
        <path d="M350 433.500h54l11 15h-54z" fill="#dfe2ea" stroke="#3f5a9c" />

        <g stroke="#15161a" strokeWidth="1.300">
            {/* saddle flange */}
            <path
                d="M542 445C530 446 527 451 527.500 462C532 483 580 515 620 515C646 515 668 498 672 483L673 473C673 465 670 460 667 457z"
                fill="#626472"
            />
            <path
                d="M542 445C530 446 526 452 531 460C545 484 588 509 620 509C648 509 673 492 673 473C673 465 670 460 667 457z"
                fill="#8e91a7"
            />
            <path d="M543 440V454C550 477 590 497 618 497C646 496 660 484 660 468V450z" fill="url(#cone)" />
            {/* cone */}
            <path d="M514 408L551 455C566 469 594 474 617 474C636 473 648 471 656 466L702 435V400z" fill="url(#cone)" />
            {/* bulb */}
            <path
                d="M532 323C508 332 495 348 495.500 370C497 388 506 401 514 408C540 430 592 446 645 445.500C668 445 690 440 700 436C718 424 729 408 729 390C729 372 720 358 708 349z"
                fill="url(#bulb)"
            />
        </g>
        <g filter="url(#gleam)" fill="#b0b4cc" opacity=".6">
            <ellipse cx="519" cy="366" rx="6" ry="20" transform="rotate(-25 519 366)" />
            <ellipse cx="540" cy="396" rx="17" ry="4" transform="rotate(18 540 396)" />
            <ellipse cx="682" cy="401" rx="24" ry="4" transform="rotate(-10 682 401)" />
        </g>

        <g stroke="#15161a" strokeWidth="1.300">
            {/* top plate */}
            <ellipse cx="617" cy="355" rx="93" ry="37" transform="rotate(9 617 355)" fill="#5c5e6b" />
            <ellipse cx="617" cy="349" rx="93" ry="37" transform="rotate(9 617 349)" fill="#9093aa" />
            <ellipse cx="617" cy="350" rx="72.500" ry="29" transform="rotate(9 617 350)" fill="#6e7081" />
            <g clipPath="url(#well)">
                <ellipse cx="617" cy="359" rx="73" ry="29" transform="rotate(9 617 359)" fill="#868a9e" />
                <path d="M572 350C564 358 566 366 584 372L590 380H650C664 376 666 362 660 354" fill="#7b7e91" />
            </g>
            {/* collar */}
            <path d="M577 338C575 352 568 356 572 363C582 374 605 379 627 379C646 379 660 375 661 368C662 362 657 358 658 346z" fill="url(#pipe)" />
            <path d="M579 322L576 346C584 360 604 366 622 366C640 366 654 362 658 356L661 330z" fill="url(#pipe)" />
            <path d="M581 318C577 321 580 329 588 336C598 344 612 347 624 347C642 347 656 341 661 332L660 324z" fill="#8a8da2" />
            {/* pipe */}
            <path d="M599 168L584 308C582 318 584 326 593 333C602 340 614 343 624 343C642 343 654 337 658 328L687 176z" fill="url(#pipe)" />
            {/* pipe rim */}
            <path
                d="M599 165C600 178 626 187 652 187C676 187 692 180 692 166C692 158 684 149 672 143H599z"
                fill="url(#pipe)"
            />
            <path d="M599 164C612 176 640 176 656 175C676 173 690 168 689 160C688 153 680 147 670 143H599z" fill="#9396ac" />
            <path d="M606 146C608 160 630 167 649 167C662 167 671 164 671 158C670 150 656 146 640 144z" fill="url(#pipe)" />
        </g>

        {/* triad */}
        <path d="M282 703h22" stroke="#c01818" strokeWidth="4" />
        <path d="M302 698l8 5-8 5z" fill="#a01010" />
        <path d="M282 702l2-18" stroke="#1a7a20" strokeWidth="4" />
        <path d="M280 686l5-10 4 10z" fill="#176b1d" />
        <path d="M282 703l6 8" stroke="#16168a" strokeWidth="4" />
        <circle cx="288" cy="712" r="4" fill="#1c1ccc" />
        <g fontFamily="Liberation Sans, sans-serif" fontSize="10">
            <text x="283" y="674" fill="#1a9a20">Y</text>
            <text x="310" y="706" fill="#e01818">X</text>
            <text x="288" y="722" fill="#1818e0">Z</text>
        </g>
    </svg>
);

const hudTools = [
    {
        label: "Zoom to fit",
        icon: (
            <>
                <circle cx="6" cy="6" r="5.500" fill="#f4f6f8" stroke="#85888e" />
                <path d="M3 5V3h2M7 3h2v2M9 7v2H7M5 9H3V7" stroke="#555" />
                <circle cx="6" cy="6" r="1.300" fill="#555" />
                <path d="M10 10l5 5" stroke="#4b86d8" strokeWidth="3" />
            </>
        ),
    },
    {
        label: "Zoom to area",
        icon: (
            <>
                <path d="M.5 .5h9v9h-9z" stroke="#777" strokeDasharray="2 1" />
                <circle cx="7" cy="6" r="4.800" fill="#f4f6f8" fillOpacity=".7" stroke="#85888e" />
                <path d="M8 3v3M8 7.500v1" stroke="#555" />
                <path d="M11 10l4 5" stroke="#4b86d8" strokeWidth="3" />
            </>
        ),
    },
    {
        label: "Previous view",
        icon: (
            <>
                <path d="M0 2l3-1 6 5 6 5-1 4-4 1-4-6z" fill="#7db4f0" stroke="#2b62b0" />
                <path d="M3 5l3-3M7 10l4-3" stroke="#fff" />
                <path d="M16 3.500H9M12 1L9 3.500 12 6" stroke="#3976c8" strokeWidth="1.500" />
            </>
        ),
    },
    {
        label: "Section view",
        icon: (
            <>
                <path d="M1 3l4-3h7l3 3v12h-4V5H5v10H1z" fill="#4d88d8" stroke="#1f3f7a" />
                <path d="M2.500 3v11M12.500 4v11" stroke="#f5d21c" strokeWidth="3" strokeDasharray="2 1" />
            </>
        ),
    },
    {
        label: "View orientation",
        caret: true,
        icon: (
            <>
                <path d="M4 .5h8l3 4v5h-4M7 0v4M15 8h-4M0 5l4-4" stroke="#444" />
                <path d="M0 5h11v10H0z" fill="#5a9ae8" />
                <path d="M0 5h11v4H0z" fill="#8cbcf2" />
                <path d="M8 1v3M6.500 3L8 4.500 9.500 3M16 8h-4" stroke="#d02020" strokeWidth="1.500" />
            </>
        ),
    },
    {
        label: "Display style",
        caret: true,
        icon: (
            <>
                <path d="M0 5l4-4h5M0 5v10" stroke="#333" strokeDasharray="2 1" />
                <path d="M6 4l4-3h6l-3 3zM6 4h7v11H6z" fill="#6aa4ee" stroke="#244a8c" />
                <path d="M12 4l3-3v11l-3 3z" fill="#2f5fb0" stroke="#244a8c" />
            </>
        ),
    },
    {
        label: "Hide items",
        caret: true,
        icon: (
            <>
                <circle cx="3.500" cy="10" r="3" fill="#dfeefa" stroke="#666" />
                <circle cx="11" cy="11" r="3" fill="#bcdcf5" stroke="#666" />
                <path d="M1 9q0-6 4-6M6.500 10q1-1 2 0M14 10q-1-6 2-5" stroke="#666" />
            </>
        ),
    },
    { label: "Edit appearance", ball: true },
    {
        label: "Apply scene",
        caret: true,
        icon: (
            <>
                <path d="M0 15l4-5h8l4 5M2 12h12M5 15l2-4M11 15l-2-4" stroke="#444" strokeWidth="1.500" />
                <path d="M8 6V0a6 6 0 00-6 6z" fill="#4f8fe8" />
                <path d="M8 6V0a6 6 0 016 6z" fill="#e03a36" />
                <path d="M8 6H2a6 6 0 006 6z" fill="#2fc02f" />
                <path d="M8 6h6a6 6 0 01-6 6z" fill="#f4c93a" />
            </>
        ),
    },
    {
        label: "View settings",
        caret: true,
        icon: (
            <>
                <path d="M.5 1.500h14v11H.5z" fill="#8a8d92" stroke="#444" />
                <path d="M2.500 3.500h10v7h-10z" fill="#cfd2d6" stroke="#555" />
                <path d="M3 15.500h9M7.500 13v2" stroke="#555" strokeWidth="1.500" />
                <path d="M4 6l4-5h8v4l-4 1-2-1-2 1z" fill="#e8b67a" stroke="#6b4317" strokeWidth=".7" />
            </>
        ),
    },
];

const HudToolbar = () => (
    <div className="absolute top-[28px] left-[284px] flex h-4 items-center">
        {hudTools.map((tool) => (
            <React.Fragment key={tool.label}>
                <button aria-label={tool.label} className="flex w-[23px] justify-center">
                    {tool.ball ? <BallGlyph /> : <Icon>{tool.icon}</Icon>}
                </button>
                {tool.caret && (
                    <button aria-label={`${tool.label} options`} className="flex w-[14px] justify-center opacity-80">
                        <Caret />
                    </button>
                )}
            </React.Fragment>
        ))}
    </div>
);

const taskTabs = [
    {
        label: "Forum",
        icon: (
            <>
                <path d="M0 1h12v8H5l-2 3V9H0z" fill="#56a0e8" stroke="#2f6fb0" strokeWidth=".6" />
                <path d="M6 6h10v7h-2v3l-3-3H6z" fill="#a6d820" stroke="#5f8c08" strokeWidth=".6" />
            </>
        ),
    },
    {
        label: "Resources",
        active: true,
        icon: (
            <>
                <path d="M11 1h3v6h-3z" fill="#c8281c" />
                <path d="M3 8v7.500h10V8L8 3z" fill="#ffe48a" stroke="#7a4e08" />
                <path d="M.5 8.500L8 1.500l7.500 7" stroke="#7a4e08" strokeWidth="3" />
                <path d="M.5 8.500L8 1.500l7.500 7" stroke="#f3c842" strokeWidth="1.300" />
                <path d="M6.500 10h3v5.500h-3z" fill="#f0b428" stroke="#7a4e08" />
            </>
        ),
    },
    {
        label: "Design library",
        icon: (
            <>
                <path d="M1 9l4-2 1 7-4 2z" fill="#2aa838" stroke="#0b4a14" />
                <path d="M6 5l3-1 1 11-3 1z" fill="#f5c81c" stroke="#5c4300" />
                <path d="M10 2l4-2 2 13-5 2z" fill="#4a74d8" stroke="#1b2f70" />
            </>
        ),
    },
    {
        label: "File explorer",
        icon: (
            <>
                <path d="M1 14V3.500h5l1 2h6V14z" fill="#f6c04a" stroke="#a86a08" />
                <path d="M1 14l3-7h12l-3 7z" fill="#ffeaa0" stroke="#b77d10" />
            </>
        ),
    },
    {
        label: "View palette",
        icon: (
            <>
                <path d="M.5 .5h15v10H.5z" fill="#f2f5fa" stroke="#2a3a70" />
                <path d="M2 2h5v2H2zM9 2h5v2H9zM3 7h4v2H3z" fill="#f2d21c" stroke="#2a3a70" strokeWidth=".6" />
                <path d="M10.500 6h5v5h-5z" fill="#9ab8e0" stroke="#2a3a70" />
                <path d="M1 14h5M4 12l3 2-3 1.500z" fill="#1414c8" stroke="#1414c8" strokeWidth="1.500" />
            </>
        ),
    },
    { label: "Appearances", ball: true },
    { label: "Custom properties", sheet: true },
];

const TaskPane = () => (
    <div className="absolute top-[60px] right-0 w-6 border-l border-black">
        {taskTabs.map((tab) => (
            <button
                key={tab.label}
                aria-label={tab.label}
                className={`flex h-6 w-full items-center justify-center border-t border-b border-t-[#e2e4e7] border-b-black ${tab.active ? "bg-[#e8eaee]" : "bg-[#a9abae]"}`}
            >
                {tab.ball && <BallGlyph />}
                {tab.sheet && <HandSheetGlyph />}
                {tab.icon && <Icon>{tab.icon}</Icon>}
            </button>
        ))}
    </div>
);

const Viewport = () => (
    <main className="relative min-w-0 flex-1">
        <Model />
        <HudToolbar />
        <div className="absolute top-[7px] right-2 flex">
            <WindowButton kind="left" />
            <WindowButton kind="right" />
            <WindowButton kind="min" />
            <WindowButton kind="restore" />
            <WindowButton kind="close" />
        </div>
        <button
            aria-label="Collapse panel"
            className="absolute top-[289px] -left-[2px] flex h-[39px] w-[9px] flex-col items-center justify-center gap-[3px] border border-l-0 border-black bg-[#e2e5e9]"
        >
            {[0, 1, 2].map((n) => (
                <Icon key={n} w={4} h={6}>
                    <path d="M4 0v6L0 3z" fill="#222" />
                </Icon>
            ))}
        </button>
        <TaskPane />
    </main>
);

/* ---------- bottom ---------- */

const playerShapes = ["M3 2v8M10 2v8L5 6z", "M9 2v8L4 6z", "M4 2v8l5-4z", "M10 2v8M3 2v8l5-4z"];

const BottomTabs = () => (
    <div className="flex h-4 shrink-0 items-stretch border-b border-black">
        <div className="w-7 border-b border-[#9a9da1]" />
        <div className="flex w-[68px] bg-[#b0b3b7] pl-[2px]">
            {playerShapes.map((shape) => (
                <button key={shape} aria-label="Seek" className="flex w-4 items-center justify-center border-l border-[#8c8f93]">
                    <Icon w={13} h={12}>
                        <path d={shape} fill="#8c8f93" stroke="#8c8f93" />
                    </Icon>
                </button>
            ))}
        </div>
        <button className="w-[57px] border-r border-l border-black bg-[#e2e5e9] leading-[14px] font-bold">Model</button>
        <button className="mb-px w-[104px] border-t border-r-2 border-b border-black bg-[#a9abae] pr-2 leading-3">Motion Study 1</button>
        <div className="flex-1 border-t border-black bg-[#e2e5e9]" />
    </div>
);

const StatusBar = () => (
    <footer className="flex h-[19px] shrink-0 items-center pl-[2px] font-['Noto_Sans',sans-serif]">
        <span className="flex-1">SolidWorks Premium 2014 x64 Edition</span>
        <span className="w-[114px]">Editing Part</span>
        <button className="flex items-center">
            <span className="w-[55px] text-left">MMGS</span>
            <Icon w={5} h={3}>
                <path d="M0 3h5L2.500 0z" fill="#3a3c40" />
            </Icon>
        </button>
        <button aria-label="Help" className="ml-[17px] flex h-[14px] w-[14px] items-center justify-center border border-[#3c5878] bg-[#eaf4ec] text-xs leading-3 font-bold text-[#109a18]">
            ?
        </button>
        <button aria-label="Tags" className="ml-[49px]">
            <Icon>
                <path d="M1 10l8-8 5-1 1 5-8 8-3 1z" fill="#f5c01c" stroke="#8a5600" />
                <circle cx="12" cy="4" r="1.300" fill="#fff" stroke="#8a5600" />
                <path d="M5 10l4-4M7 12l4-4" stroke="#b37a08" />
            </Icon>
        </button>
        <span className="ml-[14px] pr-px self-end">
            <Icon w={10} h={10}>
                <path d="M7 1h2v2H7zM4 4h2v2H4zM7 4h2v2H7zM1 7h2v2H1zM4 7h2v2H4zM7 7h2v2H7z" fill="#b0b3b7" />
            </Icon>
        </span>
    </footer>
);

const App = () => {
    return (
        <div className="flex h-screen w-full flex-col border border-[#41688e] bg-[#5a8fbf] p-[7px] pb-[6px] font-['Open_Sans',sans-serif] text-[11px] leading-4 text-[#17181a]">
            <div className="flex min-h-0 flex-1 flex-col bg-[#d7dbe0]">
                <TitleBar />
                <SnapToolbar />
                <Ribbon />
                <CommandTabs />
                <div className="flex min-h-0 flex-1">
                    <div className="flex pt-[22px]">
                        <SideToolbar />
                        <FeaturePanel />
                    </div>
                    <Viewport />
                </div>
                <BottomTabs />
                <StatusBar />
            </div>
        </div>
    );
};

export default App;
